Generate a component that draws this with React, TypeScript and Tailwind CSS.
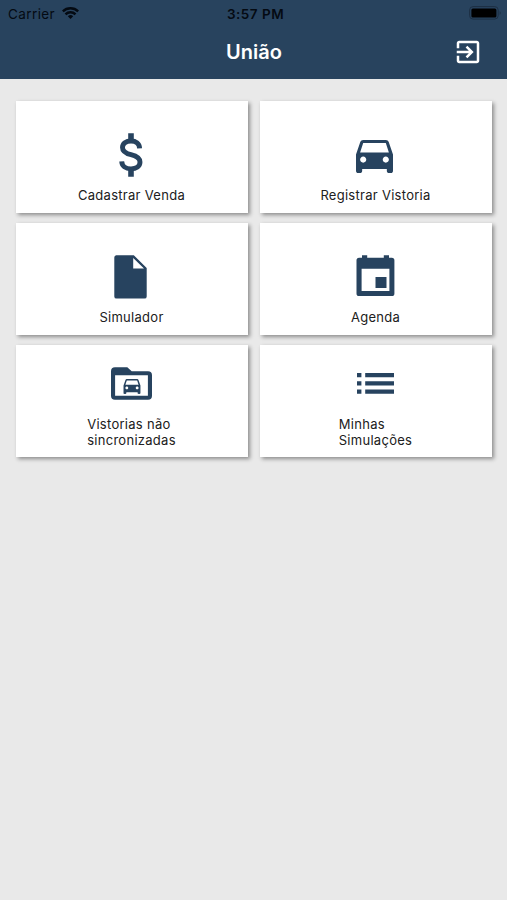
import React from "react";

const CAR =
  "M18.92 6.01C18.72 5.42 18.16 5 17.5 5h-11c-.66 0-1.21.42-1.42 1.01L3 12v8c0 .55.45 1 1 1h1c.55 0 1-.45 1-1v-1h12v1c0 .55.45 1 1 1h1c.55 0 1-.45 1-1v-8l-2.08-5.99zM6.5 16c-.83 0-1.5-.67-1.5-1.5S5.67 13 6.5 13s1.5.67 1.5 1.5S7.33 16 6.5 16zm11 0c-.83 0-1.5-.67-1.5-1.5s.67-1.5 1.5-1.5 1.5.67 1.5 1.5-.67 1.5-1.5 1.5zM5 11l1.5-4.5h11L19 11H5z";

function DollarIcon() {
  return (
    <svg className="h-11 w-6" viewBox="0 0 24 44" fill="none" stroke="currentColor">
      <path d="M12 .2v8M12 35.5v8.2" strokeWidth="5.6" />
      <path d="M20.6 15.3C20.4 10.6 17 8 12 8c-5 0-8.5 2.5-8.5 6.4 0 4.1 3.3 5.9 8.5 7.2 5.8 1.4 9 3.3 9 7.5 0 4.2-3.7 6.8-9 6.8-5.4 0-9-2.700-9.300-7.500" strokeWidth="4.9" />
    </svg>
  );
}

function CarIcon() {
  return (
    <svg className="h-[33px] w-[37px]" viewBox="3 5 18 16" preserveAspectRatio="none" fill="currentColor">
      <path d={CAR} />
    </svg>
  );
}

function DocumentIcon() {
  return (
    <svg className="h-[44px] w-[33px]" viewBox="0 0 33 44" fill="currentColor">
      <path fillRule="evenodd" d="M2.2.2h17.6L32.7 13v28.4a2.2 2.2 0 0 1-2.2 2.2H2.5a2.2 2.2 0 0 1-2.2-2.2V2.4A2.2 2.2 0 0 1 2.2.2zM19.2 2.900v10.700H30z" />
    </svg>
  );
}

function CalendarIcon() {
  return (
    <svg className="ml-[2px] h-[42px] w-[39px]" viewBox="0 0 39 42" fill="currentColor">
      <path fillRule="evenodd" d="M6 .3h5.2v2.4h16.6V.3H33v2.4h2.8a2.6 2.6 0 0 1 2.6 2.6v33.2a2.6 2.6 0 0 1-2.6 2.6H3.1A2.6 2.6 0 0 1 .5 38.5V5.3a2.6 2.6 0 0 1 2.6-2.6H6zM5.6 13.7v22.2h27.8V13.7z" />
      <path d="M19.5 22h11v11h-11z" />
    </svg>
  );
}

function FolderCarIcon() {
  return (
    <svg className="ml-[2px] h-[33px] w-[41px]" viewBox="0 0 41 33" fill="currentColor">
      <path fillRule="evenodd" d="M4 .2h12.3l4.4 4H37a4 4 0 0 1 4 4v20.6a4 4 0 0 1-4 4H4a4 4 0 0 1-4-4V4.2a4 4 0 0 1 4-4zM4.1 8.2v20.5h32.8V8.2z" />
      <g transform="translate(9.7 7.3) scale(.94 .94)">
        <path d={CAR} />
      </g>
    </svg>
  );
}

function ListIcon() {
  return (
    <svg className="ml-[2px] h-[21px] w-[37px]" viewBox="0 0 37 21" fill="currentColor">
      <path d="M0 0h4.4v4.3H0zM8.2 0H37v4.3H8.2zM0 8.2h4.4v4.3H0zM8.2 8.2H37v4.3H8.2zM0 16.4h4.4v4.3H0zM8.2 16.4H37v4.3H8.2z" />
    </svg>
  );
}

function Card({ icon, pad, label }: { icon: React.ReactNode; pad: string; label: React.ReactNode }) {
  return (
    <section className={`flex h-[112px] flex-col items-center justify-between bg-white pr-[3px] text-[#27435f] shadow-[2px_2px_4px_rgba(0,0,0,0.4)] ${pad}`}>
      {icon}
      <div className="pl-[2px] text-[13px] leading-4 tracking-[0.28px] whitespace-nowrap text-[#202020]">{label}</div>
    </section>
  );
}

export default function App() {
  return (
    <main className="h-[900px] w-[507px] overflow-hidden bg-[#e9e9e9] font-['Inter','Liberation_Sans',sans-serif]">
      <header className="h-[79px] bg-[#28435e]">
        <div className="grid h-7 grid-cols-3 items-center pr-[5px] pl-2 text-[13.5px] text-[#040a12]">
          <div className="flex items-center gap-[7px]">
            <span className="tracking-[0.4px]">Carrier</span>
            <svg className="-mt-0.5 h-3 w-[17px]" viewBox="0 0 17 12" fill="none" stroke="currentColor" strokeWidth="2.5">
              <path d="M.8 4.4a11 11 0 0 1 15.4 0M3.5 7.3a7.1 7.1 0 0 1 10 0" />
              <path d="M8.5 12 5.8 9.3a3.9 3.9 0 0 1 5.4 0z" fill="currentColor" stroke="none" />
            </svg>
          </div>
          <span className="pl-px text-center font-semibold tracking-[0.5px]">3:57 PM</span>
          <svg className="-mt-0.5 h-[14px] w-[33px] justify-self-end" viewBox="0 0 33 14">
            <rect x=".6" y=".6" width="28.6" height="12.5" rx="3.5" fill="none" stroke="#1d2f43" />
            <rect x="2.4" y="2.4" width="25" height="9" rx="1.5" fill="#000" />
            <path d="M30.7 5q2 2 0 4z" fill="#1d2f43" />
          </svg>
        </div>
        <div className="grid h-12 grid-cols-[1fr_auto_1fr] items-center pr-6 pl-px text-white">
          <span />
          <h1 className="pl-[24px] text-[20px] font-semibold">União</h1>
          <svg className="size-[30px] justify-self-end" viewBox="0 0 24 24" fill="currentColor">
            <path d="M10.09 15.59 11.5 17l5-5-5-5-1.41 1.41L12.67 11H3v2h9.67l-2.58 2.59zM19 3H5c-1.11 0-2 .9-2 2v4h2V5h14v14H5v-4H3v4c0 1.1.89 2 2 2h14c1.1 0 2-.9 2-2V5c0-1.1-.9-2-2-2z" />
          </svg>
        </div>
      </header>
      <div className="grid grid-cols-2 gap-x-3 gap-y-[10.1px] pt-[22.3px] pr-[15px] pl-4">
        <Card icon={<DollarIcon />} pad="pt-8 pb-[10.3px]" label="Cadastrar Venda" />
        <Card icon={<CarIcon />} pad="pt-[39px] pb-[10.3px]" label="Registrar Vistoria" />
        <Card icon={<DocumentIcon />} pad="pt-[31.6px] pb-[10.4px]" label="Simulador" />
        <Card icon={<CalendarIcon />} pad="pt-[31.6px] pb-[10.4px]" label="Agenda" />
        <Card icon={<FolderCarIcon />} pad="pt-[21.5px] pb-[9.5px]" label={<>Vistorias não<br />sincronizadas</>} />
        <Card icon={<ListIcon />} pad="pt-[27.5px] pb-[9.5px]" label={<>Minhas<br />Simulações</>} />
      </div>
    </main>
  );
}
